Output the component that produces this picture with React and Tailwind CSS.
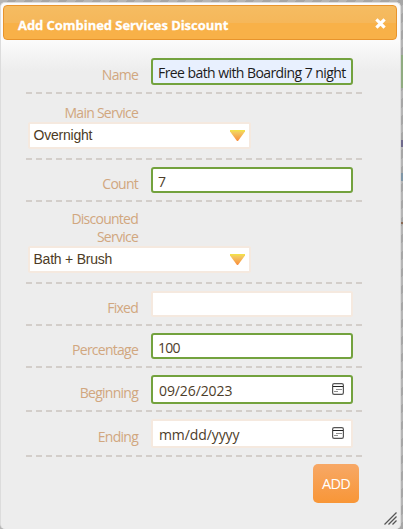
import React from "react";

const DASH =
  "h-[2px] w-full shrink-0 bg-[repeating-linear-gradient(90deg,#d3ceca_0px,#d3ceca_6px,transparent_6px,transparent_10px)]";
const LABEL =
  "w-[112px] shrink-0 text-right text-[14px] leading-[18px] tracking-[-0.75px] text-[#d1a77f] whitespace-nowrap";
const VALID = "border-2 border-[#73a23e] rounded-[3px]";
const PLAIN = "border-2 border-[#f5e9df] rounded-[2px]";

function Row({ className, children }) {
  return (
    <div className={`flex flex-col ${className}`}>
      <div className="flex-1 min-h-0">{children}</div>
      <div className={DASH} />
    </div>
  );
}

function Field({ label, labelClass, inputClass, children }) {
  return (
    <div className="flex items-start">
      <div className={`${LABEL} ${labelClass}`}>{label}</div>
      <div
        className={`ml-[13px] flex w-[202px] shrink-0 items-center whitespace-nowrap pl-[5px] text-[14px] text-[#4d3d2a] ${inputClass}`}
      >
        {children}
      </div>
    </div>
  );
}

function Select({ id, value }) {
  return (
    <div
      className={`ml-[2px] flex h-[27px] w-[223px] items-center justify-between bg-white pl-[3.5px] pr-[4px] ${PLAIN}`}
    >
      <span className="mb-[2px] font-['Liberation_Sans',sans-serif] text-[14px] leading-[16px] tracking-[-0.22px] text-[#4d3b25]">
        {value}
      </span>
      <svg width="15" height="11" viewBox="0 0 15 11" className="shrink-0">
        <defs>
          <linearGradient id={id} x1="0" y1="0" x2="0" y2="1">
            <stop offset="0" stopColor="#f3e545" />
            <stop offset="0.25" stopColor="#f3c860" />
            <stop offset="1" stopColor="#fa8c3c" />
          </linearGradient>
        </defs>
        <path d="M0 0H15V1.5L8 11H7L0 1.5Z" fill={`url(#${id})`} />
      </svg>
    </div>
  );
}

function Calendar() {
  return (
    <svg width="12" height="12" viewBox="0 0 12 12" className="mb-[2px] ml-auto mr-[7px] shrink-0">
      <rect x="0.6" y="0.6" width="10.8" height="10.8" rx="1.6" fill="none" stroke="#555" strokeWidth="1.2" />
      <path d="M1 3.5H11" stroke="#222" strokeWidth="1" />
      <path d="M5 6.5h1M7 6.5h1M9 6.5h1M3 8.5h1M5 8.5h1" transform="translate(-0.5 0)" stroke="#222" strokeWidth="1.2" />
    </svg>
  );
}

export default function App() {
  return (
    <div className="flex h-[529px] w-[403px] overflow-hidden bg-[#aaa] bg-[repeating-linear-gradient(135deg,#b5b5b5_0px,#b5b5b5_6px,#a6a6a6_6px,#a6a6a6_12px)] pt-[2px] font-['Open_Sans','Noto_Sans',sans-serif]">
      <div className="flex h-[527px] w-[401px] shrink-0 flex-col rounded-[5px] border border-b-0 border-[#dcdcdc] bg-[#ededed] bg-[linear-gradient(180deg,#fbfbfb_0px,#fbfbfb_38px,#ededed_68px)] px-[2px] pt-[2px]">
        <header className="flex h-[35px] w-[394px] shrink-0 items-center justify-between rounded-[4px] border border-[#e8942c] bg-[linear-gradient(180deg,#f5bc62_0%,#f5b75a_50%,#f8b148_51%,#f8b148_100%)] pl-[14px] pr-[10px]">
          <h1 className="mt-[5px] whitespace-nowrap text-[13px] font-bold leading-[18px] tracking-[-0.05px] text-white [-webkit-text-stroke:0.3px_white]">
            Add Combined Services Discount
          </h1>
          <svg width="11" height="11" viewBox="0 0 11 11" className="mt-[2px]">
            <path d="M1.4 1.4L9.6 9.6M9.6 1.4L1.4 9.6" stroke="white" strokeWidth="3.2" />
          </svg>
        </header>
        <main className="ml-[23px] flex w-[337px] flex-col">
          <Row className="h-[54px]">
            <Field label="Name" labelClass="mt-[26px]" inputClass={`mt-[18px] h-[27px] bg-[#e8f0fe] ${VALID}`}>
              <span className="mt-[2px] tracking-[-0.57px] text-[#1c1c1c]">Free bath with Boarding 7 night</span>
            </Field>
          </Row>
          <Row className="h-[66px]">
            <div className={`${LABEL} pt-[10px]`}>Main Service</div>
            <Select id="arrow-main" value="Overnight" />
          </Row>
          <Row className="h-[42px]">
            <Field label="Count" labelClass="mt-[15px]" inputClass={`mt-[7px] h-[26px] bg-white ${VALID}`}>
              <span className="mt-[2px]">7</span>
            </Field>
          </Row>
          <Row className="h-[82px]">
            <div className={`${LABEL} pt-[8px]`}>
              Discounted
              <br />
              Service
            </div>
            <Select id="arrow-discounted" value="Bath + Brush" />
          </Row>
          <Row className="h-[42px]">
            <Field label="Fixed" labelClass="mt-[15px]" inputClass={`mt-[7px] h-[26px] bg-white ${PLAIN}`} />
          </Row>
          <Row className="h-[42px]">
            <Field label="Percentage" labelClass="mt-[15px]" inputClass={`mt-[7px] h-[26px] bg-white ${VALID}`}>
              <span className="mt-[2px] tracking-[-0.7px]">100</span>
            </Field>
          </Row>
          <Row className="h-[44px]">
            <Field label="Beginning" labelClass="mt-[16px]" inputClass={`mt-[7px] h-[29px] bg-white ${VALID}`}>
              <span className="ml-px mt-[2px] tracking-[-0.1px]">09/26/2023</span>
              <Calendar />
            </Field>
          </Row>
          <Row className="h-[45px]">
            <Field label="Ending" labelClass="mt-[16px]" inputClass={`mt-[7px] h-[29px] bg-white ${PLAIN}`}>
              <span className="ml-px mt-[2px] tracking-[-0.1px]">mm/dd/yyyy</span>
              <Calendar />
            </Field>
          </Row>
          <button className="ml-[287px] mt-[7px] flex h-[39px] w-[46px] items-center justify-center rounded-[5px] bg-[linear-gradient(180deg,#f7a866,#f89637)] text-[14.5px] tracking-[-0.8px] text-white">
            ADD
          </button>
        </main>
        <svg width="13" height="13" viewBox="0 0 13 13" className="ml-auto mr-px mt-[9px] shrink-0">
          <path d="M0.5 12.5L12.5 0.5M4.5 12.5L12.5 4.5M8.5 12.5L12.5 8.5" stroke="#555" strokeWidth="1.3" />
        </svg>
      </div>
      <div className="flex w-[2px] shrink-0 flex-col">
        <div className="mt-[53px] h-[33px] bg-[#8fab80]" />
        <div className="mt-[52px] h-[7px] bg-[#6f6a8c]" />
        <div className="mt-[26px] h-[8px] bg-[#7f96a6]" />
        <div className="mt-[41px] h-[2px] bg-[#8a6a55]" />
      </div>
    </div>
  );
}
